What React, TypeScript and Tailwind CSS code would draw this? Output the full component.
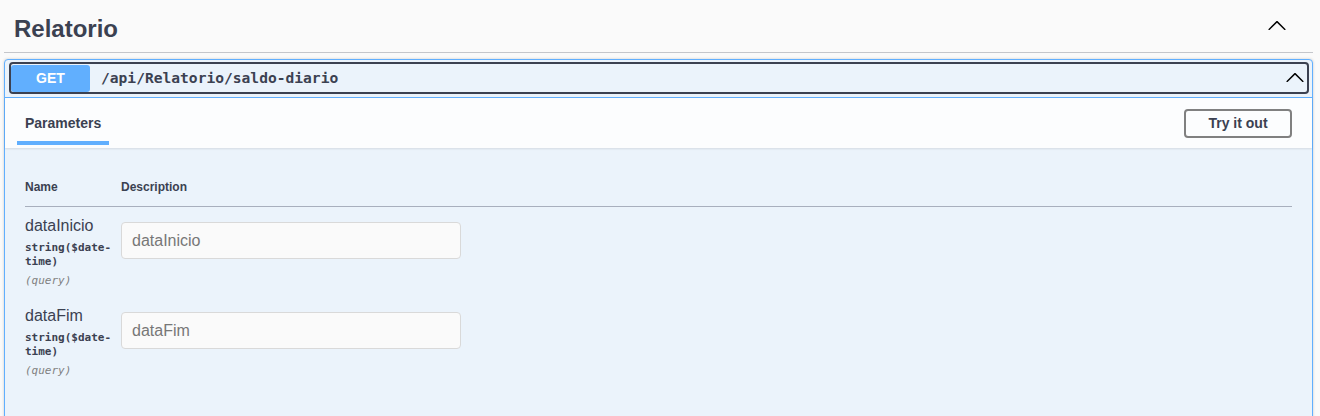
import React from 'react'

const sans = { fontFamily: '"Liberation Sans", Arial, sans-serif' }

function Chevron({ className }: { className?: string }) {
  // swagger-ui arrow, pointing up
  return (
    <svg viewBox="0 0 20 20" className={className} fill="currentColor">
      <path
        transform="rotate(180 10 10)"
        d="M17.418 6.109c.272-.268.709-.268.979 0s.271.701 0 .969l-7.908 7.83c-.27.268-.707.268-.979 0l-7.908-7.83c-.27-.268-.27-.701 0-.969.271-.268.709-.268.979 0L10 13.25l7.418-7.141z"
      />
    </svg>
  )
}

type Param = { name: string; type: string[]; loc: string }

const params: Param[] = [
  { name: 'dataInicio', type: ['string($date-', 'time)'], loc: '(query)' },
  { name: 'dataFim', type: ['string($date-', 'time)'], loc: '(query)' },
]

function ParamRow({ p }: { p: Param }) {
  return (
    <div className="flex h-[90px]">
      <div className="w-[96px] pt-[9px]">
        <div className="text-[16px] leading-[20px] text-[#3b4151]">{p.name}</div>
        <div className="mt-[5px] font-['DejaVu_Sans_Mono',monospace] text-[11px] font-bold leading-[14px] text-[#3b4151]">
          {p.type.map(t => <div key={t}>{t}</div>)}
        </div>
        <div className="mt-[5px] font-['DejaVu_Sans_Mono',monospace] text-[11px] italic leading-[14px] text-[#808080]">
          {p.loc}
        </div>
      </div>
      <div className="pt-[15px]">
        <input
          placeholder={p.name}
          className="h-[37px] w-[340px] rounded-[4px] border border-[#d9d9d9] bg-[#fafafa] px-[10px] text-[16px] text-[#3b4151] placeholder:text-[#777777] outline-none"
          style={sans}
        />
      </div>
    </div>
  )
}

export default function App() {
  return (
    <div className="h-[416px] w-[1320px] overflow-hidden bg-[#fafafa] pl-[4px]" style={sans}>
      <div className="w-[1309px]">
        {/* Tag header */}
        <div className="flex h-[53px] items-center justify-between border-b border-[#c4c6cb] pl-[10px] pr-[26px] pt-[5px]">
          <h3 className="text-[24px] font-bold text-[#3b4151]">Relatorio</h3>
          <Chevron className="-mt-[5px] h-[20px] w-[20px] text-black" />
        </div>

        {/* Operation block */}
        <div className="mt-[6px] rounded-[4px] border border-[#61affe] bg-[#ebf3fb] shadow-[0_0_3px_rgba(0,0,0,0.19)]">
          <div className="border-b border-[#61affe] pb-[3px] pl-[4px] pr-[3px] pt-[2px]">
            <div className="flex h-[32px] items-center rounded-[4px] border-2 border-[#3b4151] pr-[2px]">
              <span className="flex h-[27px] w-[79px] items-center justify-center rounded-[3px] bg-[#61affe] text-[14px] font-bold text-white">
                GET
              </span>
              <span className="ml-[11px] flex-1 font-['DejaVu_Sans_Mono',monospace] text-[14.6px] font-bold text-[#3b4151]">
                /api/Relatorio/saldo-diario
              </span>
              <Chevron className="h-[20px] w-[20px] text-black" />
            </div>
          </div>

          {/* Tab header */}
          <div className="flex h-[50px] items-center justify-between bg-[#fcfdfe] pl-[12px] pr-[20px] shadow-[0_1px_2px_rgba(0,0,0,0.1)]">
            <div className="relative flex h-full items-center">
              <span className="px-[8px] text-[14px] font-bold text-[#3b4151]">Parameters</span>
              <span className="absolute bottom-[3px] left-0 h-[4px] w-[92px] bg-[#61affe]" />
            </div>
            <button className="h-[29px] w-[108px] rounded-[4px] border-2 border-[#808080] text-[14px] font-bold text-[#3b4151]">
              Try it out
            </button>
          </div>

          {/* Parameters table */}
          <div className="px-[20px] pt-[29px]">
            <div className="flex h-[30px] items-center border-b border-[#a8afbd] pb-[10px] text-[12px] font-bold text-[#3b4151]">
              <div className="w-[96px]">Name</div>
              <div>Description</div>
            </div>
            {params.map(p => <ParamRow key={p.name} p={p} />)}
            <div className="h-[40px]" />
          </div>
        </div>
      </div>
    </div>
  )
}
